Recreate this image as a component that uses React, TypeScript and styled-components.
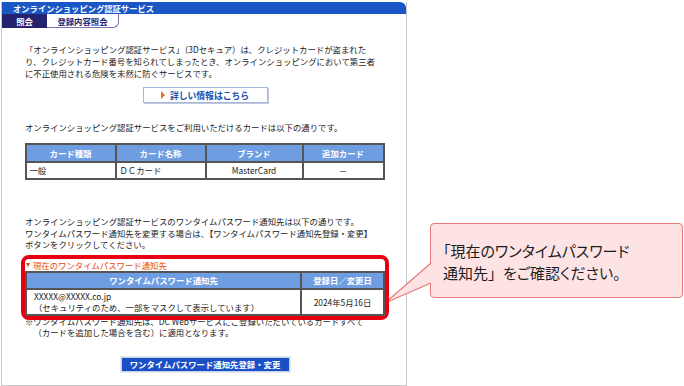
import styled, { createGlobalStyle } from "styled-components";

const GlobalStyle = createGlobalStyle`
  html, body {
    margin: 0;
    padding: 0;
    background: #ffffff;
  }
  body {
    font-family: "Noto Sans CJK JP", "Noto Sans", sans-serif;
    color: #1a1a1a;
  }
`;

const Stage = styled.div`
  position: relative;
  width: 684px;
  height: 386px;
  overflow: hidden;
  display: flex;
  align-items: flex-start;
`;

const Panel = styled.div`
  box-sizing: border-box;
  width: 406px;
  height: 384px;
  margin: 2px 0 0 1px;
  border: 1px solid #c8c8c8;
  border-top: none;
  display: flex;
  flex-direction: column;
`;

const TitleBar = styled.div`
  height: 12px;
  background: #1a56c4;
  border-top-right-radius: 6px;
  color: #fff;
  font-size: 8.3px;
  font-weight: 700;
  line-height: 12px;
  padding-left: 11px;
  white-space: nowrap;
`;

const Tabs = styled.div`
  display: flex;
  height: 14px;
`;

const Tab = styled.div<{ $active?: boolean }>`
  box-sizing: border-box;
  width: ${(p) => (p.$active ? "45px" : "72px")};
  height: 14px;
  display: flex;
  align-items: center;
  justify-content: center;
  font-size: 8.4px;
  font-weight: 700;
  background: ${(p) => (p.$active ? "#25226f" : "#fff")};
  color: ${(p) => (p.$active ? "#fff" : "#25226f")};
  border-right: ${(p) => (p.$active ? "none" : "1px solid #7f72b4")};
  border-bottom: ${(p) => (p.$active ? "none" : "1px solid #7f72b4")};
  border-bottom-right-radius: ${(p) => (p.$active ? "0" : "6px")};
`;

const Content = styled.div`
  padding: 0 21px 0 23px;
  display: flex;
  flex-direction: column;
`;

const Text = styled.p<{ $top: number; $lh?: number }>`
  margin: ${(p) => p.$top}px 0 0;
  font-size: 8.4px;
  line-height: ${(p) => p.$lh ?? 12}px;
  white-space: nowrap;
`;

const LinkButton = styled.button`
  box-sizing: border-box;
  align-self: center;
  margin-top: 8px;
  width: 125px;
  height: 16px;
  padding: 0;
  background: #fff;
  border: 1px solid #a4b6dc;
  box-shadow: 1px 1px 0 #c3c9d8;
  display: flex;
  align-items: center;
  justify-content: center;
  gap: 5px;
  font-family: inherit;
  font-size: 8.8px;
  font-weight: 700;
  color: #1d4fae;
  cursor: pointer;
`;

const Arrow = styled.span`
  width: 0;
  height: 0;
  border-top: 4px solid transparent;
  border-bottom: 4px solid transparent;
  border-left: 4px solid #f06a10;
`;

const Table = styled.table`
  width: 360px;
  margin-left: -0.5px;
  border: 1px solid #555;
  border-spacing: 0;
  table-layout: fixed;
  font-size: 8.4px;
`;

const Th = styled.th<{ $w?: number }>`
  width: ${(p) => (p.$w ? `${p.$w}px` : "auto")};
  background: #6e9de2;
  color: #fff;
  font-weight: 700;
  border: 1px solid #555;
  padding: 0;
  height: 16px;
  line-height: 16px;
  text-align: center;
`;

const Td = styled.td<{ $align?: string }>`
  border: 1px solid #555;
  padding: 0 3px;
  height: 15px;
  line-height: 15px;
  text-align: ${(p) => p.$align ?? "left"};
  background: #fff;
  white-space: nowrap;
`;

const Highlight = styled.div`
  position: relative;
  z-index: 1;
  margin: 4px -4px 0 -4px;
  border: 4px solid #e60012;
  border-radius: 8px;
  background: #fff;
  display: flex;
  flex-direction: column;
`;

const SectionTitle = styled.div`
  height: 12.4px;
  line-height: 12px;
  font-size: 8.4px;
  color: #e8480f;
  padding-left: 1px;
  white-space: nowrap;
  display: flex;
  align-items: center;
  gap: 3px;
`;

const DownMark = styled.span`
  width: 0;
  height: 0;
  border-left: 2.5px solid transparent;
  border-right: 2.5px solid transparent;
  border-top: 4px solid #e8480f;
`;

const NotifyTable = styled(Table)`
  width: 100%;
  margin-left: 0;
`;

const NotifyTh = styled(Th)`
  height: 15.5px;
  line-height: 15.5px;
`;

const NotifyTd = styled(Td)`
  height: 24px;
  padding: 0 7px;
`;

const CellLine = styled.div`
  height: 11px;
  line-height: 11px;
`;

const Note = styled.p`
  margin: -4px 0 0;
  font-size: 8.4px;
  line-height: 11px;
  padding-left: 8.4px;
  text-indent: -8.4px;
  white-space: nowrap;
`;

const SubmitButton = styled.button`
  box-sizing: border-box;
  align-self: center;
  margin-top: 19px;
  width: 169px;
  height: 15px;
  padding: 0;
  background: #1b4fc6;
  border: 1px solid #c9d2e4;
  outline: 1px solid #e6eaf2;
  color: #fff;
  font-family: inherit;
  font-size: 8.4px;
  font-weight: 700;
  line-height: 13px;
  cursor: pointer;
`;

const Callout = styled.div`
  position: absolute;
  left: 430px;
  top: 223px;
  box-sizing: border-box;
  width: 253px;
  height: 75px;
  padding: 16px 0 0 12px;
  background: #fde3e3;
  border: 1px solid #e87a7a;
  border-radius: 4px;
  font-size: 15px;
  line-height: 22px;
  color: #1e1e1e;
  font-feature-settings: "palt";
  white-space: nowrap;
`;

const WideMark = styled.span`
  font-feature-settings: normal;
`;

const Tail = styled.svg`
  position: absolute;
  left: -47px;
  top: 38px;
`;

const cards = [["一般", "ＤＣカード", "MasterCard", "－"]];

function App() {
  return (
    <Stage>
      <GlobalStyle />
      <Panel>
        <TitleBar>オンラインショッピング認証サービス</TitleBar>
        <Tabs>
          <Tab $active>照会</Tab>
          <Tab>登録内容照会</Tab>
        </Tabs>
        <Content>
          <Text $top={15}>
            「オンラインショッピング認証サービス」（3Dセキュア）は、クレジットカードが盗まれた
            <br />
            り、クレジットカード番号を知られてしまったとき、オンラインショッピングにおいて第三者
            <br />
            に不正使用される危険を未然に防ぐサービスです。
          </Text>
          <LinkButton>
            <Arrow />
            詳しい情報はこちら
          </LinkButton>
          <Text $top={18}>
            オンラインショッピング認証サービスをご利用いただけるカードは以下の通りです。
          </Text>
          <Table style={{ marginTop: 10 }}>
            <thead>
              <tr>
                <Th $w={88}>カード種類</Th>
                <Th $w={88}>カード名称</Th>
                <Th $w={95}>ブランド</Th>
                <Th>追加カード</Th>
              </tr>
            </thead>
            <tbody>
              {cards.map((c) => (
                <tr key={c[1]}>
                  <Td>{c[0]}</Td>
                  <Td>{c[1]}</Td>
                  <Td $align="center">{c[2]}</Td>
                  <Td $align="center">{c[3]}</Td>
                </tr>
              ))}
            </tbody>
          </Table>
          <Text $top={36} $lh={11.5}>
            オンラインショッピング認証サービスのワンタイムパスワード通知先は以下の通りです。
            <br />
            ワンタイムパスワード通知先を変更する場合は、【ワンタイムパスワード通知先登録・変更】
            <br />
            ボタンをクリックしてください。
          </Text>
          <Highlight>
            <SectionTitle>
              <DownMark />
              現在のワンタイムパスワード通知先
            </SectionTitle>
            <NotifyTable>
              <thead>
                <tr>
                  <NotifyTh $w={273}>ワンタイムパスワード通知先</NotifyTh>
                  <NotifyTh>登録日／変更日</NotifyTh>
                </tr>
              </thead>
              <tbody>
                <tr>
                  <NotifyTd>
                    <CellLine>XXXXX@XXXXX.co.jp</CellLine>
                    <CellLine>（セキュリティのため、一部をマスクして表示しています）</CellLine>
                  </NotifyTd>
                  <NotifyTd $align="center">2024年5月16日</NotifyTd>
                </tr>
              </tbody>
            </NotifyTable>
          </Highlight>
          <Note>
            ※ワンタイムパスワード通知先は、DC Webサービスにご登録いただいているカードすべて
            <br />
            （カードを追加した場合を含む）に適用となります。
          </Note>
          <SubmitButton>ワンタイムパスワード通知先登録・変更</SubmitButton>
        </Content>
      </Panel>
      <Callout>
        「現在のワンタイムパスワード
        <br />
        通知先<WideMark>」</WideMark>をご確認ください。
        <Tail width="49" height="44" viewBox="0 0 49 44">
          <polygon points="48,1 1,41 48,21" fill="#fde3e3" />
          <polyline
            points="47,1 1,41 47,21"
            fill="none"
            stroke="#e87a7a"
            strokeWidth="1.2"
          />
        </Tail>
      </Callout>
    </Stage>
  );
}

export default App;
